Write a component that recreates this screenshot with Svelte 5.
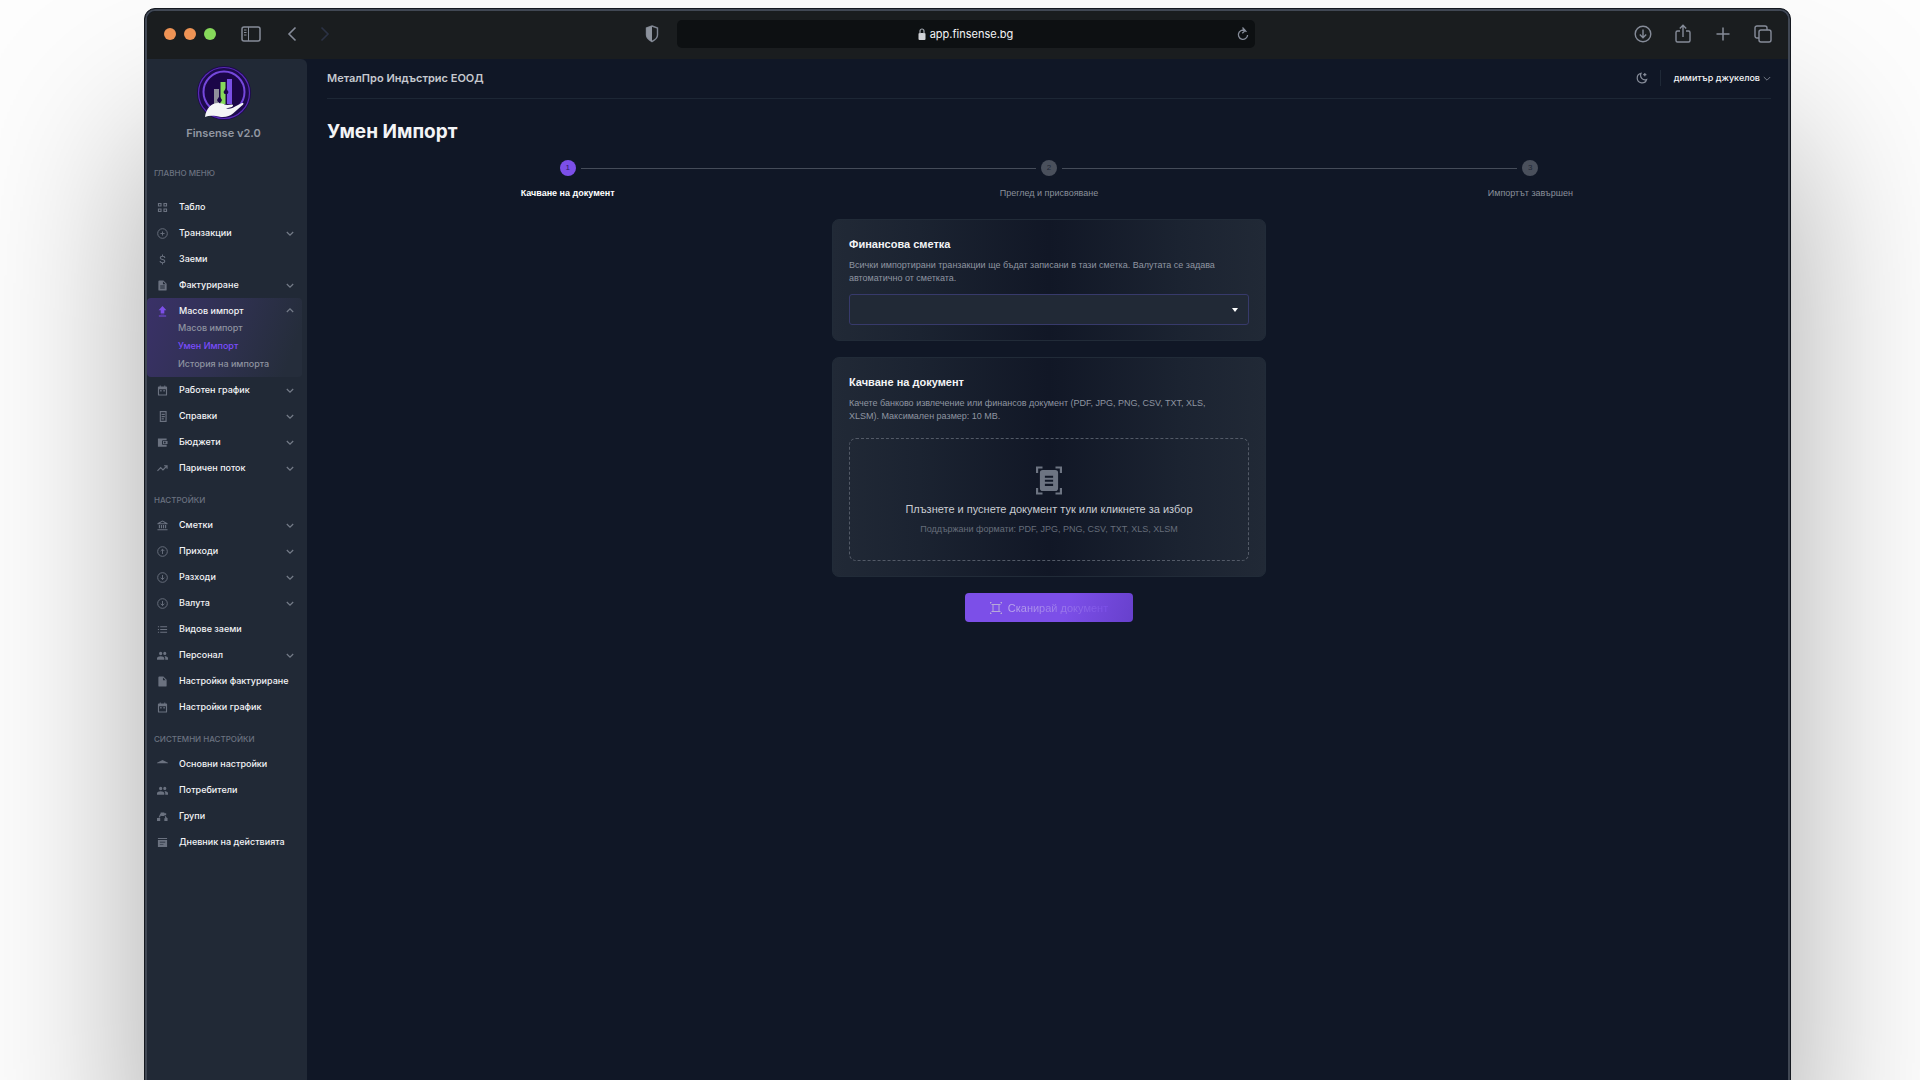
<script lang="ts">
	interface Item {
		icon: string;
		label: string;
		expandable?: boolean;
		children?: string[];
	}

	interface Section {
		title: string;
		items: Item[];
	}

	const sections: Section[] = [
		{
			title: 'Главно меню',
			items: [
				{ icon: 'grid', label: 'Табло' },
				{ icon: 'plus', label: 'Транзакции', expandable: true },
				{ icon: 'dollar', label: 'Заеми' },
				{ icon: 'doc', label: 'Фактуриране', expandable: true },
				{
					icon: 'upload',
					label: 'Масов импорт',
					expandable: true,
					children: ['Масов импорт', 'Умен Импорт', 'История на импорта'],
				},
				{ icon: 'calendar', label: 'Работен график', expandable: true },
				{ icon: 'report', label: 'Справки', expandable: true },
				{ icon: 'wallet', label: 'Бюджети', expandable: true },
				{ icon: 'trend', label: 'Паричен поток', expandable: true },
			],
		},
		{
			title: 'Настройки',
			items: [
				{ icon: 'bank', label: 'Сметки', expandable: true },
				{ icon: 'up', label: 'Приходи', expandable: true },
				{ icon: 'down', label: 'Разходи', expandable: true },
				{ icon: 'down', label: 'Валута', expandable: true },
				{ icon: 'list', label: 'Видове заеми' },
				{ icon: 'people', label: 'Персонал', expandable: true },
				{ icon: 'file', label: 'Настройки фактуриране' },
				{ icon: 'calendar', label: 'Настройки график' },
			],
		},
		{
			title: 'Системни настройки',
			items: [
				{ icon: 'roof', label: 'Основни настройки' },
				{ icon: 'people', label: 'Потребители' },
				{ icon: 'groups', label: 'Групи' },
				{ icon: 'log', label: 'Дневник на действията' },
			],
		},
	];

	const steps = ['Качване на документ', 'Преглед и присвояване', 'Импортът завършен'];

	let openItem = $state('Масов импорт');
	let current = $state('Умен Импорт');

	function toggle(item: Item) {
		if (!item.expandable) return;
		openItem = openItem === item.label ? '' : item.label;
	}
</script>

{#snippet navIcon(name: string)}
	<svg class="nav-icon" viewBox="0 0 24 24" fill="currentColor" aria-hidden="true">
		{#if name === 'grid'}
			<path fill-rule="evenodd" d="M2 2h8v8H2zm2.500 2.500v3h3v-3zM14 2h8v8h-8zm2.500 2.500v3h3v-3zM2 14h8v8H2zm2.500 2.500v3h3v-3zM14 14h8v8h-8zm2.500 2.500v3h3v-3z" />
		{:else if name === 'plus'}
			<g fill="none" stroke="currentColor" stroke-width="2"><circle cx="12" cy="12" r="10.500" /><path d="M12 7.500v9M7.500 12h9" /></g>
		{:else if name === 'dollar'}
			<path fill="none" stroke="currentColor" stroke-width="2.200" d="M12 1v4M12 19v4M17 8.500C17 6.500 15 5 12 5S7.200 6.500 7.200 8.600C7.200 13 17 10.600 17 15.300 17 17.500 15 19 12 19s-5.200-1.500-5.200-3.600" />
		{:else if name === 'doc'}
			<path fill-rule="evenodd" d="M3 3a2 2 0 0 1 2-2h9l7 7v13a2 2 0 0 1-2 2H5a2 2 0 0 1-2-2zM13 3v6h6zM7 12v2h10v-2zm0 4.500v2h10v-2z" />
		{:else if name === 'upload'}
			<path d="M12 0l8.500 9H16v6H8V9H3.500zM8 16.500h8v1.500H8zM4 20.500h16V23H4z" />
		{:else if name === 'calendar'}
			<path fill-rule="evenodd" d="M6 1h2v2h8V1h2v2h2a2 2 0 0 1 2 2v16a2 2 0 0 1-2 2H4a2 2 0 0 1-2-2V5a2 2 0 0 1 2-2h2zM4.500 9v11.500h15V9zM7 11h3v3H7zM14 11h3v3h-3z" />
		{:else if name === 'report'}
			<path fill-rule="evenodd" d="M6 0h15v24H6zm2.500 2.500v19h10v-19zM10 6h7v2.500h-7zM10 11h7v2.500h-7zM10 16h5v2.500h-5z" />
		{:else if name === 'wallet'}
			<path fill-rule="evenodd" d="M2 3h19v4h-8a2 2 0 0 0-2 2v6a2 2 0 0 0 2 2h8v4H2zM13 8.500h10v7H13zm4 1.500a2 2 0 1 0 0 4 2 2 0 0 0 0-4z" />
		{:else if name === 'trend'}
			<path fill="none" stroke="currentColor" stroke-width="2.400" d="M1 17l7-7 5 5 9-9M15.500 6H22v6.500" />
		{:else if name === 'bank'}
			<path d="M12 1l11 6v2H1V7zm0 2.500L6 7h12zM4 11h2.500v7H4zM8.500 11H11v7H8.500zM13 11h2.500v7H13zM17.500 11H20v7h-2.500zM1 20h22v2.500H1z" fill-rule="evenodd" />
		{:else if name === 'up'}
			<g fill="none" stroke="currentColor" stroke-width="2"><circle cx="12" cy="12" r="10.500" /><path d="M12 17.500V7.500M8 11l4-4 4 4" /></g>
		{:else if name === 'down'}
			<g fill="none" stroke="currentColor" stroke-width="2"><circle cx="12" cy="12" r="10.500" /><path d="M12 6.500v10M8 12.500l4 4 4-4" /></g>
		{:else if name === 'list'}
			<path d="M2 5h2.500v2H2zM7 5h15v2H7zM2 11h2.500v2H2zM7 11h15v2H7zM2 17h2.500v2H2zM7 17h15v2H7z" />
		{:else if name === 'people'}
			<path d="M8 4a3.600 3.600 0 1 1 0 7.200A3.600 3.600 0 0 1 8 4zm9 0a3.400 3.400 0 1 1 0 6.800A3.400 3.400 0 0 1 17 4zM0 21v-3c0-3 4-4.500 8-4.500s8 1.500 8 4.500v3zm18 0v-3.200c0-1.800-.8-3.200-2-4.100 4.200 0 8 1.300 8 4.300v3z" />
		{:else if name === 'file'}
			<path fill-rule="evenodd" d="M3 3a2 2 0 0 1 2-2h9l7 7v13a2 2 0 0 1-2 2H5a2 2 0 0 1-2-2zM13 3v6h6z" />
		{:else if name === 'roof'}
			<path d="M0 9.500V8l12-6 12 6v1.500z" />
		{:else if name === 'groups'}
			<path d="M8 3h8v2h4v4h-4v2H9V9L6 14H3.500L7 6h1zM0 15h7v7H0zM17 12l2-1 2.500 4H23v7h-7v-6h2z" />
		{:else if name === 'log'}
			<path fill-rule="evenodd" d="M2 2h20v2.500H2zM2 6.500h20V22H2zm4 4V12h12v-1.500zm0 4.500v1.500h8V15z" />
		{/if}
	</svg>
{/snippet}

<div class="page">
	<div class="window">
		<header class="toolbar">
			<div class="tools">
				<div class="lights">
					<span class="light"></span>
					<span class="light"></span>
					<span class="light green"></span>
				</div>
				<button class="tool sidebar-toggle" aria-label="Sidebar">
					<svg width="20" height="16" viewBox="0 0 20 16" fill="none" stroke="currentColor">
						<rect x="1" y="1" width="18" height="14" rx="2" stroke-width="1.500" />
						<path d="M7.500 1v14M3 4h2.500M3 6.500h2.500M3 9h2.500" />
					</svg>
				</button>
				<button class="tool back" aria-label="Back">
					<svg width="10" height="16" viewBox="0 0 10 16" fill="none" stroke="currentColor" stroke-width="1.600">
						<path d="M8.500 1.500L2 8l6.500 6.500" />
					</svg>
				</button>
				<button class="tool forward" aria-label="Forward" disabled>
					<svg width="10" height="16" viewBox="0 0 10 16" fill="none" stroke="currentColor" stroke-width="1.600">
						<path d="M1.500 1.500L8 8l-6.500 6.500" />
					</svg>
				</button>
			</div>
			<div class="address-wrap">
				<svg class="shield" width="14" height="18" viewBox="0 0 14 18" fill="none">
					<path d="M7 1l5.500 2v7c0 3-2.500 5-5.500 6.500C4 15 1.500 13 1.500 10V3z" stroke="#7f8591" stroke-width="1.400" />
					<path d="M7 1v15.500C4 15 1.500 13 1.500 10V3z" fill="#8c929c" />
				</svg>
				<div class="address">
					<span class="url">
						<svg width="8" height="12" viewBox="0 0 8 12" fill="none">
							<rect x="0.500" y="5" width="7" height="7" rx="1" fill="#d1d3d7" />
							<path d="M2 5.500V3a2 2 0 0 1 4 0v2.500" stroke="#a4a8b0" stroke-width="1.200" />
						</svg>
						app.finsense.bg
					</span>
					<button class="tool reload" aria-label="Reload">
						<svg width="12" height="14" viewBox="0 0 12 14" fill="none" stroke="currentColor" stroke-width="1.300">
							<path d="M9.500 4.800A4.600 4.600 0 1 0 10.600 8M4.500 3.200L8 3.500M5.500 .5L8.200 3.500 5.300 6.200" />
						</svg>
					</button>
				</div>
			</div>
			<div class="tools right">
				<button class="tool" aria-label="Downloads">
					<svg width="18" height="18" viewBox="0 0 18 18" fill="none" stroke="currentColor" stroke-width="1.400">
						<circle cx="9" cy="9" r="7.800" /><path d="M9 4.500v8M5.800 9.500L9 12.700l3.200-3.200" />
					</svg>
				</button>
				<button class="tool" aria-label="Share">
					<svg width="18" height="20" viewBox="0 0 18 20" fill="none" stroke="currentColor" stroke-width="1.400">
						<path d="M6 7H3.500A1.500 1.500 0 0 0 2 8.500v8A1.500 1.500 0 0 0 3.500 18h11a1.500 1.500 0 0 0 1.500-1.500v-8A1.500 1.500 0 0 0 14.500 7H12M9 13V1.500M5.800 4.500L9 1.300l3.200 3.200" />
					</svg>
				</button>
				<button class="tool" aria-label="New tab">
					<svg width="18" height="18" viewBox="0 0 18 18" fill="none" stroke="currentColor" stroke-width="1.500">
						<path d="M9 2.500v13M2.500 9h13" />
					</svg>
				</button>
				<button class="tool" aria-label="Tabs">
					<svg width="18" height="18" viewBox="0 0 18 18" fill="none" stroke="currentColor" stroke-width="1.400">
						<rect x="5" y="5" width="12" height="12" rx="2" />
						<path d="M5 13H3a2 2 0 0 1-2-2V3a2 2 0 0 1 2-2h8a2 2 0 0 1 2 2v2" />
					</svg>
				</button>
			</div>
		</header>

		<div class="app">
			<aside class="sidebar">
				<div class="brand">
					<svg width="54" height="54" viewBox="0 0 54 54" aria-hidden="true">
						<circle cx="27" cy="27" r="27" fill="#1d0a4d" />
						<circle cx="27" cy="27" r="25.500" fill="none" stroke="#5a2bb8" stroke-width="1.200" />
						<circle cx="27" cy="26" r="20.500" fill="#1b0648" stroke="#7548dc" stroke-width="2" />
						<path d="M17 23h5v15h-5z" fill="#8f8f9b" />
						<path d="M23.500 16h5v22h-5z" fill="#86d95a" />
						<path d="M30 13h5v25h-5z" fill="#7a4fe6" />
						<path d="M20 34l2.500-4 2.500 4-1 2h-3zM26.500 26l2.500-4 2.500 4-1 2h-3z" fill="#1b0648" />
						<path d="M8 51c1-8 6-14 13-14 4 0 6 1.500 9 2l5-.5c2 .5 1 2.500-2 3l-4 1c4 1 7-.500 10-2.500l6-3c2-.500 2 1 0 2.500l-9 8c-3 2.500-7 4-12 3.500-6-1-11-2-16 0z" fill="#f4f5f7" />
					</svg>
					<span>Finsense v2.0</span>
				</div>
				<nav>
					{#each sections as section}
						<h2>{section.title}</h2>
						<ul>
							{#each section.items as item}
								{@const open = openItem === item.label}
								<li class:open>
									<button class="item" onclick={() => toggle(item)}>
										{@render navIcon(item.icon)}
										<span class="label">{item.label}</span>
										{#if item.expandable}
											<svg class="chevron" viewBox="0 0 8 8" fill="none" stroke="currentColor" stroke-width="1.200">
												<path d={open ? 'M.8 5L4 1.800l3.200 3.200' : 'M.8 3L4 6.200l3.200-3.200'} />
											</svg>
										{/if}
									</button>
									{#if open && item.children}
										<div class="children">
											{#each item.children as child}
												<a href="#import" class:active={child === current} onclick={() => (current = child)}>{child}</a>
											{/each}
										</div>
									{/if}
								</li>
							{/each}
						</ul>
					{/each}
				</nav>
			</aside>

			<main>
				<div class="topbar">
					<span class="company">МеталПро Индъстрис ЕООД</span>
					<div class="account">
						<button class="tool moon" aria-label="Тема">
							<svg width="12" height="12" viewBox="0 0 12 12" fill="none" stroke="currentColor" stroke-width="1.200">
								<path d="M5 1.400A4.800 4.800 0 1 0 10.600 7.500 4.500 4.500 0 0 1 5 1.400zM8.800 1v3.200M7.200 2.600h3.200" />
							</svg>
						</button>
						<button class="user">
							димитър джукелов
							<svg class="chevron" viewBox="0 0 8 8" fill="none" stroke="currentColor" stroke-width="1">
								<path d="M.8 3L4 6.200l3.200-3.200" />
							</svg>
						</button>
					</div>
				</div>

				<h1>Умен Импорт</h1>

				<ol class="steps">
					{#each steps as step, i}
						<li class:current={i === 0}>
							<div class="marker">
								<span class="line" class:hidden={i === 0}></span>
								<span class="num">{i + 1}</span>
								<span class="line" class:hidden={i === steps.length - 1}></span>
							</div>
							<span>{step}</span>
						</li>
					{/each}
				</ol>

				<form class="import" onsubmit={(e) => e.preventDefault()}>
					<section class="card">
						<label class="card-title" for="account">Финансова сметка</label>
						<p>Всички импортирани транзакции ще бъдат записани в тази сметка. Валутата се задава автоматично от сметката.</p>
						<div class="select">
							<select id="account"><option value=""></option></select>
							<svg width="6" height="4" viewBox="0 0 6 4"><path d="M0 0h6L3 4z" fill="#fff" /></svg>
						</div>
					</section>

					<section class="card upload">
						<h3 class="card-title">Качване на документ</h3>
						<p>Качете банково извлечение или финансов документ (PDF, JPG, PNG, CSV, TXT, XLS, XLSM). Максимален размер: 10 MB.</p>
						<label class="drop">
							<input type="file" accept=".pdf,.jpg,.png,.csv,.txt,.xls,.xlsm" />
							<svg width="26" height="29" viewBox="0 0 24 26" fill="#6d7482">
								<path d="M0 0h6v2H2v4H0zM18 0h6v6h-2V2h-4zM0 20h2v4h4v2H0zM22 20h2v6h-6v-2h4z" />
								<path fill-rule="evenodd" d="M6.200 3.300h11.600a2.600 2.600 0 0 1 2.600 2.600v14.200a2.600 2.600 0 0 1-2.600 2.600H6.200a2.600 2.600 0 0 1-2.600-2.600V5.900a2.600 2.600 0 0 1 2.600-2.600zm2 5.200v2h7.600v-2zM8.200 12.200v2h7.600v-2zM8.200 16v2h7.600v-2z" />
							</svg>
							<span class="drop-title">Плъзнете и пуснете документ тук или кликнете за избор</span>
							<span class="drop-hint">Поддържани формати: PDF, JPG, PNG, CSV, TXT, XLS, XLSM</span>
						</label>
					</section>

					<button class="submit" type="submit">
						<svg width="12" height="12" viewBox="0 0 12 12" fill="none" stroke="#b7a9d8">
							<path d="M0 .5h1.500M.5 0v1.500M10.500.5H12M11.500 0v1.500M0 11.500h1.500M.5 10.500V12M10.500 11.500H12M11.500 10.500V12M3 2.500h6v7H3zM1.500 2.500H3M9 2.500h1.500M1.500 9.500H3M9 9.500h1.500" />
						</svg>
						<span>Сканирай документ</span>
					</button>
				</form>
			</main>
		</div>
	</div>
</div>

<style>
	:global(body) {
		background: #fdfdfd;
	}

	.page {
		box-sizing: border-box;
		height: 100vh;
		padding: 8px 129px 0 144px;
		overflow: hidden;
		display: flex;
		font-family: Inter, 'Noto Sans', sans-serif;
		color: #f3f4f6;
	}

	/* runs past the bottom edge so only three sides of the frame show */
	.window {
		flex: 1;
		display: flex;
		flex-direction: column;
		margin-bottom: -4px;
		border: 1px solid #14181f;
		border-radius: 11px 11px 0 0;
		box-shadow:
			inset 0 0 0 2px #414854,
			0 130px 170px rgba(0, 0, 0, 0.34);
		background: #101726;
		padding: 2px 2px 0;
	}

	button {
		font: inherit;
		color: inherit;
		background: none;
		border: 0;
		padding: 0;
		cursor: pointer;
	}

	svg {
		display: block;
		flex-shrink: 0;
	}

	/* browser toolbar */
	.toolbar {
		display: grid;
		grid-template-columns: 13fr 610px 14fr;
		align-items: center;
		height: 48px;
		padding: 0 16px 3px 17px;
		background: #1a1d1f;
		border-radius: 9px 9px 0 0;
		box-sizing: border-box;
	}

	.tools {
		display: flex;
		align-items: center;
	}
	.tools.right {
		justify-content: flex-end;
		gap: 22px;
	}

	.lights {
		display: flex;
		gap: 8px;
	}

	.light {
		width: 12px;
		height: 12px;
		border-radius: 50%;
		background: #ee9355;
	}
	.light.green { background: #86d95a; }

	.tool { color: #868c99; }
	.sidebar-toggle { margin-left: 25px; }
	.back { margin-left: 26px; }
	.forward { margin-left: 23px; color: #2b3245; }

	.address-wrap {
		display: flex;
		align-items: center;
		gap: 18px;
	}

	.address {
		flex: 1;
		display: flex;
		align-items: center;
		height: 28px;
		padding: 0 6px 0 18px;
		border-radius: 5px;
		background: #0d1012;
	}

	.url {
		flex: 1;
		display: flex;
		align-items: center;
		justify-content: center;
		gap: 4px;
		font-size: 11px;
	}

	/* layout */
	.app {
		flex: 1;
		display: flex;
	}

	.sidebar {
		width: 160px;
		flex-shrink: 0;
		background: #212936;
		border-top-right-radius: 6px;
	}

	.brand {
		display: flex;
		flex-direction: column;
		align-items: center;
		gap: 5px;
		padding: 7px 7px 23px 0;
		font-size: 11px;
		line-height: 16px;
		font-weight: 600;
		color: #9297a2;
	}

	.sidebar h2 {
		margin: 0;
		padding: 13px 7px 6px;
		font-size: 8px;
		line-height: 12px;
		font-weight: 500;
		text-transform: uppercase;
		color: #6b7280;
	}
	.sidebar h2:first-child { padding: 3px 7px 15px; }

	.sidebar ul {
		list-style: none;
		margin: 0;
		padding: 0;
	}

	.item {
		display: flex;
		align-items: center;
		width: 100%;
		padding: 5px 13px 5px 10px;
		font-size: 9px;
		line-height: 16px;
		font-weight: 500;
		text-align: left;
		white-space: nowrap;
	}

	.label { flex: 1; }

	.nav-icon {
		width: 11px;
		height: 11px;
		margin-right: 11px;
		color: #6b7280;
	}

	.chevron {
		width: 8px;
		height: 8px;
		color: #757c89;
	}

	li.open {
		margin-right: 5px;
		padding-bottom: 4px;
		border-radius: 4px;
		background: linear-gradient(110deg, #3a3168 0%, #2f3150 50%, #252d3b 90%);
	}
	.open .item { padding: 5px 8px 0 10px; }
	.open .nav-icon { color: #7c4fe8; }

	.children a {
		display: block;
		padding-left: 31px;
		font-size: 9px;
		line-height: 18px;
		font-weight: 500;
		color: #8e93a0;
		text-decoration: none;
	}
	.children a.active { color: #7c4dff; }

	main {
		flex: 1;
		padding: 0 17px 0 20px;
	}

	.topbar {
		display: flex;
		align-items: center;
		justify-content: space-between;
		height: 37px;
		padding-bottom: 2px;
		border-bottom: 1px solid #1d2735;
	}

	.company {
		font-size: 11px;
		font-weight: 600;
		color: #c6c9cf;
	}

	.account {
		display: flex;
		align-items: center;
	}

	.user {
		display: flex;
		align-items: center;
		gap: 3px;
		margin-left: 12px;
		padding-left: 13px;
		border-left: 1px solid #1f2937;
		font-size: 9px;
		line-height: 16px;
		font-weight: 500;
	}

	h1 {
		margin: 20px 0 15px;
		font-size: 19px;
		line-height: 26px;
		font-weight: 700;
	}

	/* stepper */
	.steps {
		display: flex;
		list-style: none;
		margin: 0 0 20px;
		padding: 0;
	}
	.steps li {
		flex: 1;
		display: flex;
		flex-direction: column;
		align-items: center;
		gap: 11px;
		font-family: 'Liberation Sans', Arial, sans-serif;
		font-size: 9px;
		line-height: 12px;
		color: #8a909b;
	}
	.steps li.current {
		font-weight: 700;
		color: #fff;
	}

	.marker {
		display: flex;
		align-items: center;
		gap: 5px;
		width: 100%;
	}

	.line {
		flex: 1;
		height: 1px;
		background: #454c59;
	}
	.line.hidden { visibility: hidden; }

	.num {
		width: 16px;
		height: 16px;
		border-radius: 50%;
		background: #4a505c;
		color: #1f2735;
		font-size: 8px;
		line-height: 16px;
		font-weight: 400;
		text-align: center;
	}
	.current .num {
		background: #7c4fe8;
		color: #2c1a63;
	}

	/* import form */
	.import {
		display: flex;
		flex-direction: column;
		align-items: center;
		gap: 16px;
		font-family: 'Liberation Sans', Arial, sans-serif;
	}

	.card {
		box-sizing: border-box;
		width: 30%;
		min-width: 434px;
		padding: 15px 16px;
		border: 1px solid #212b38;
		border-radius: 7px;
		background: linear-gradient(90deg, #212936 0%, #1b2331 20%, #111726 50%, #1b2331 80%, #212936 100%);
	}

	.card-title {
		display: block;
		margin: 0;
		padding: 2px 0;
		font-size: 11px;
		line-height: 14px;
		font-weight: 700;
	}

	.card p {
		margin: 6px 0 9px;
		padding-right: 16px;
		font-size: 9px;
		line-height: 13px;
		color: #8f95a1;
	}

	.select {
		position: relative;
	}
	.select select {
		display: block;
		appearance: none;
		box-sizing: border-box;
		width: 100%;
		height: 31px;
		border: 1px solid #373a6b;
		border-radius: 3px;
		background: #212936;
		color: #f3f4f6;
	}
	.select svg {
		position: absolute;
		right: 11px;
		top: 14px;
		pointer-events: none;
	}

	.card.upload p { margin-bottom: 15px; }

	.drop {
		display: flex;
		flex-direction: column;
		align-items: center;
		padding: 27px 0 23px;
		border: 1px dashed #535a67;
		border-radius: 7px;
		cursor: pointer;
	}
	.drop input {
		position: absolute;
		width: 1px;
		height: 1px;
		opacity: 0;
	}

	.drop-title {
		margin-top: 6px;
		font-size: 11px;
		line-height: 16px;
		color: #c9ccd2;
	}
	.drop-hint {
		margin-top: 4px;
		font-size: 9px;
		line-height: 16px;
		color: #666d7a;
	}

	.submit {
		display: flex;
		align-items: center;
		gap: 6px;
		height: 29px;
		padding: 0 25px;
		border-radius: 4px;
		background: linear-gradient(110deg, #7c4fe8 60%, #6740cc 100%);
		font-size: 11px;
	}
	.submit span {
		background: linear-gradient(90deg, #bda9ec, #7c4fe8);
		background-clip: text;
		color: transparent;
	}
</style>
